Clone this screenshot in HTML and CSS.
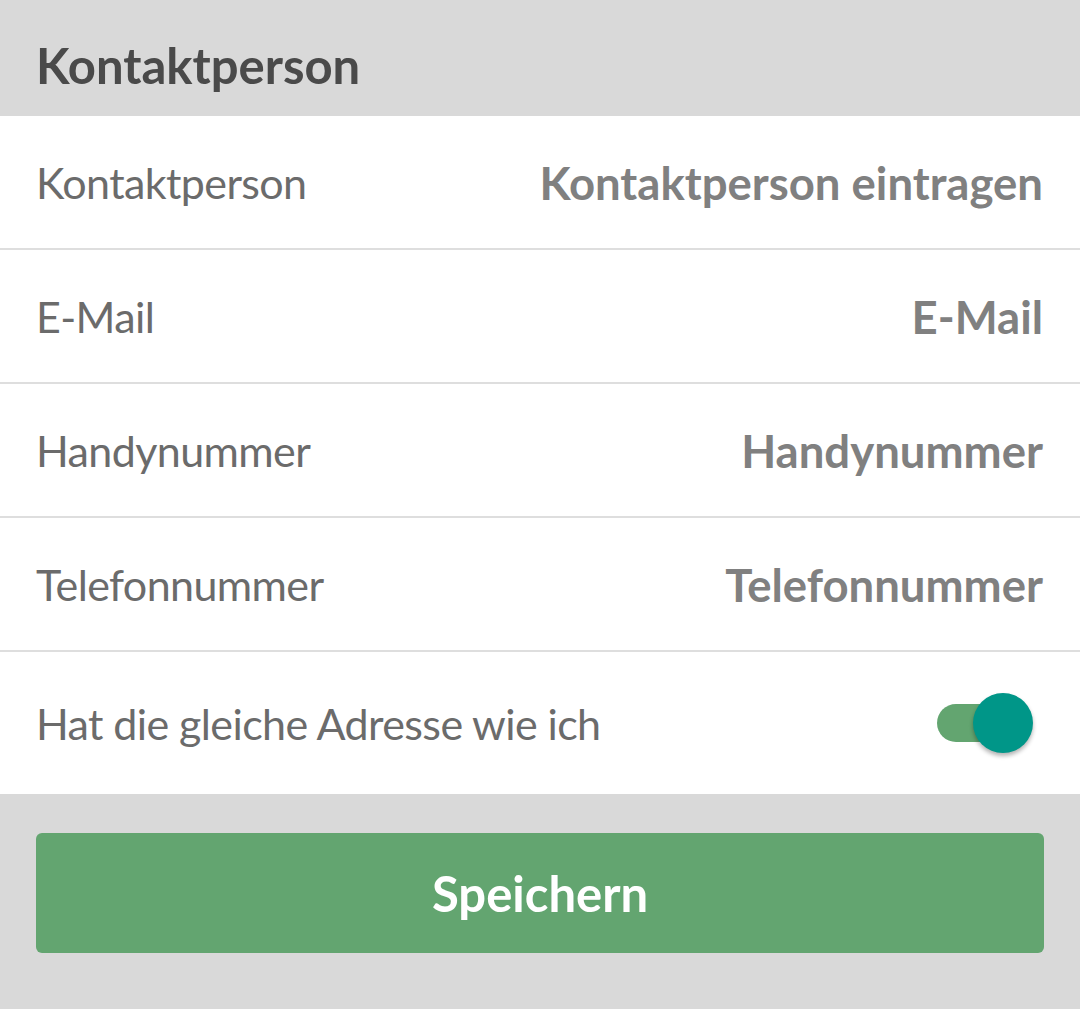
FILE: index.html
```html
<!DOCTYPE html>
<html lang="de">
<head>
    <meta charset="UTF-8">
    <meta name="viewport" content="width=device-width, initial-scale=1.0">
    <title>Kontaktperson</title>
    <link rel="stylesheet" href="styles.css">
</head>
<body>
    <div class="section-title">Kontaktperson</div>

    <div class="form-list">
        <div class="form-row">
            <span class="label">Kontaktperson</span>
            <span class="value">Kontaktperson eintragen</span>
        </div>
        <div class="form-row">
            <span class="label">E-Mail</span>
            <span class="value">E-Mail</span>
        </div>
        <div class="form-row">
            <span class="label">Handynummer</span>
            <span class="value">Handynummer</span>
        </div>
        <div class="form-row">
            <span class="label">Telefonnummer</span>
            <span class="value">Telefonnummer</span>
        </div>
        <div class="form-row switch-row">
            <span class="label">Hat die gleiche Adresse wie ich</span>
            <span class="switch on">
                <span class="track"></span>
                <span class="knob"></span>
            </span>
        </div>
    </div>

    <div class="actions">
        <button class="save-btn">Speichern</button>
    </div>
</body>
</html>
```

FILE: styles.css
```css
body {
    margin: 0;
    font-family: 'Lato', sans-serif;
    background-color: #d9d9d9;
}
.section-title {
    height: 75px;
    padding: 41px 36px 0;
    font-size: 49px;
    line-height: 1;
    font-weight: bold;
    color: #4a4a4a;
}
.form-list {
    background-color: white;
}
.form-row {
    height: 132px;
    padding: 0 36px;
    display: flex;
    align-items: center;
    justify-content: space-between;
    border-bottom: 2px solid #dedede;
}
.form-row:last-child {
    border-bottom: none;
    height: 142px;
}
.label {
    font-size: 43px;
    color: #6b6b6b;
    letter-spacing: -0.6px;
}
.value {
    font-size: 45.5px;
    font-weight: bold;
    color: #808080;
    margin-right: 1px;
}
.switch {
    position: relative;
    width: 96px;
    height: 60px;
    margin-right: 11px;
}
.switch .track {
    position: absolute;
    left: 0;
    top: 11px;
    width: 70px;
    height: 38px;
    border-radius: 19px;
    background-color: #63a570;
}
.switch .knob {
    position: absolute;
    right: 0;
    top: 0;
    width: 60px;
    height: 60px;
    border-radius: 50%;
    background-color: #009688;
    box-shadow: 0 3px 4px rgba(0,0,0,0.3);
}
.actions {
    padding: 39px 36px 57px;
}
.save-btn {
    display: block;
    width: 100%;
    height: 120px;
    border: none;
    border-radius: 6px;
    background-color: #63a570;
    color: white;
    font-family: 'Lato', sans-serif;
    font-size: 49px;
    font-weight: bold;
    cursor: pointer;
}
```
